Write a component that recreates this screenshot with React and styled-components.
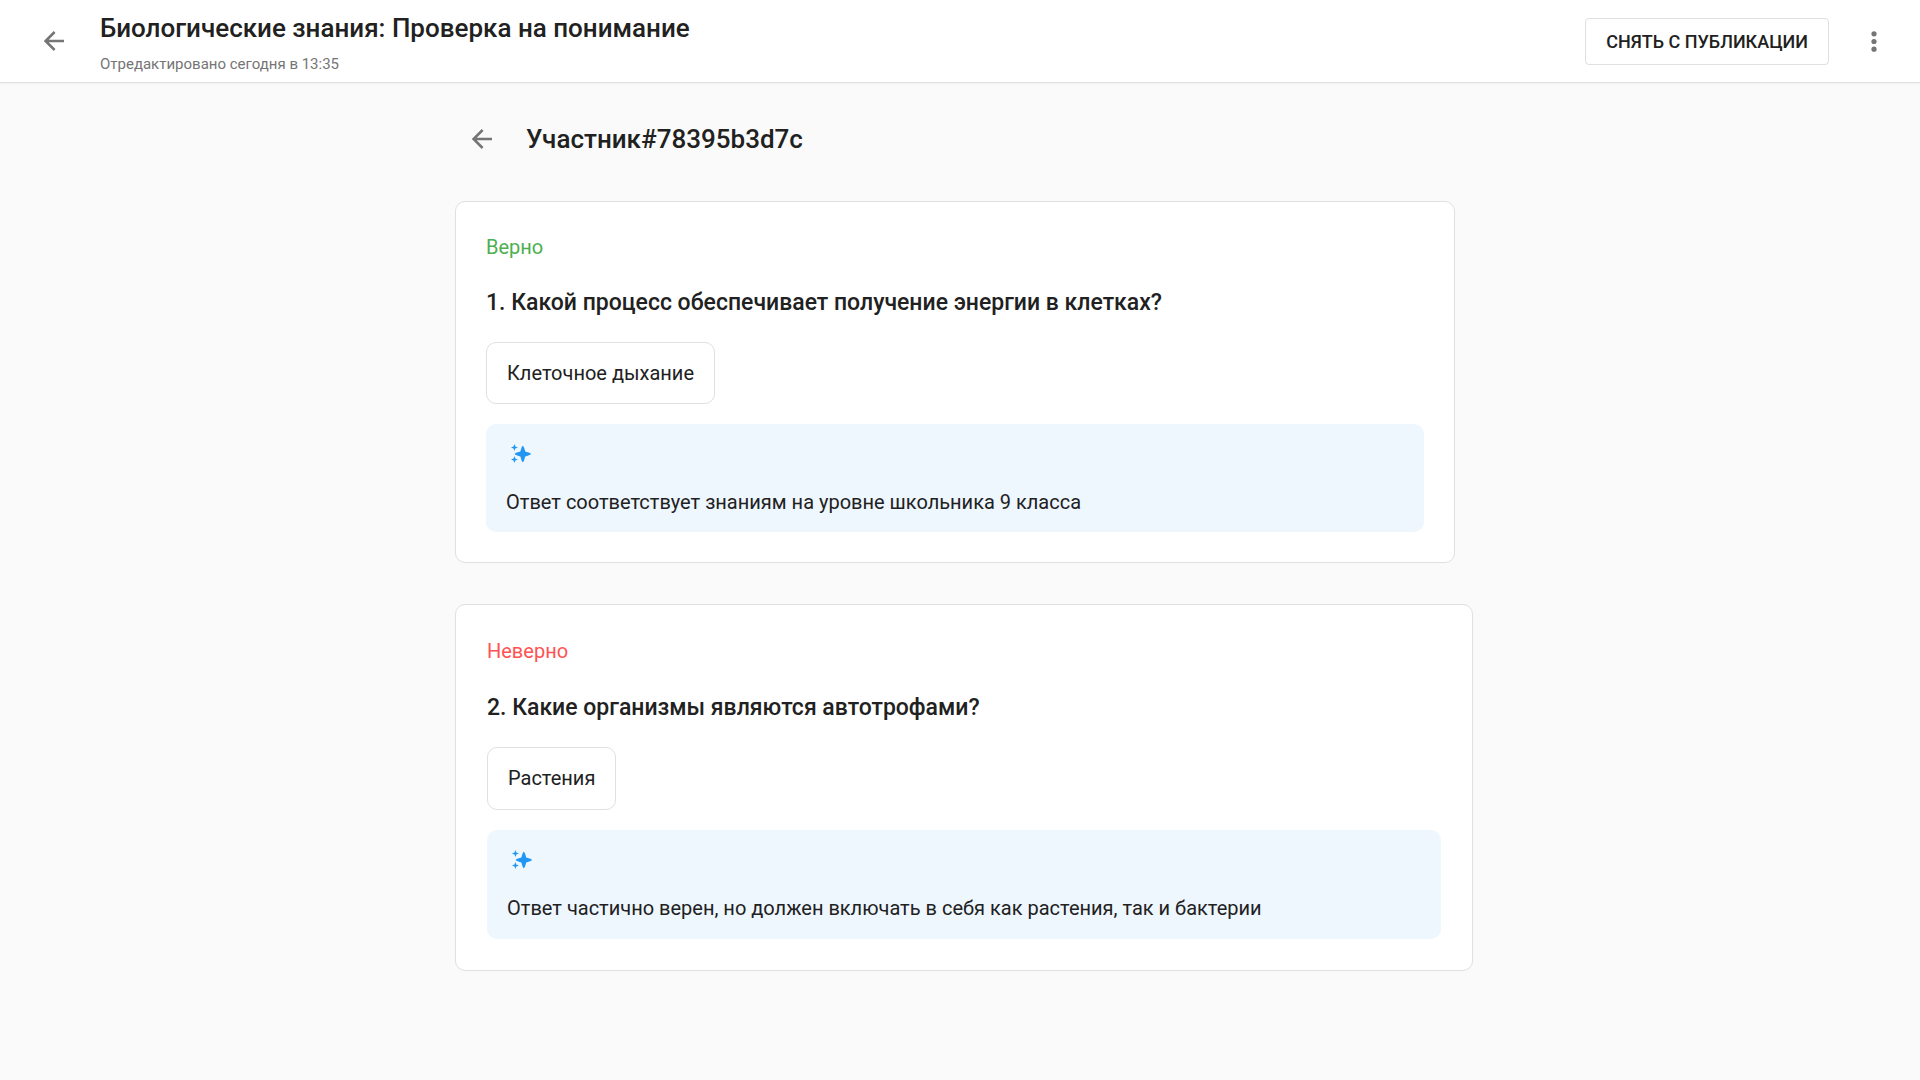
import React from "react";
import styled, { createGlobalStyle } from "styled-components";

const GlobalStyle = createGlobalStyle`
  * {
    box-sizing: border-box;
  }
  body {
    margin: 0;
    background: #fafafa;
    color: #212121;
    font-family: Roboto, "Liberation Sans", sans-serif;
  }
`;
const Header = styled.header`
  display: flex;
  align-items: center;
  height: 83px;
  padding: 0 24px 0 32px;
  background: #fff;
  border-bottom: 1px solid #e0e0e0;
  box-shadow: 0 1px 2px rgba(0, 0, 0, 0.04);
`;
const IconButton = styled.button`
  display: flex;
  align-items: center;
  justify-content: center;
  width: 44px;
  height: 44px;
  padding: 0;
  border: none;
  background: none;
  color: #757575;
  cursor: pointer;
`;
const HeaderText = styled.div`
  flex: 1;
  margin-left: 24px;
  padding-top: 6px;
`;
const HeaderTitle = styled.h1`
  margin: 0;
  font-size: 26px;
  font-weight: 500;
  line-height: 32px;
`;
const Edited = styled.p`
  margin: 8px 0 0;
  color: #757575;
  font-size: 15px;
  line-height: 24px;
`;
const UnpublishButton = styled.button`
  height: 47px;
  margin-right: 23px;
  padding: 0 20px;
  border: 1px solid #e0e0e0;
  border-radius: 4px;
  background: #fff;
  color: #212121;
  font-family: inherit;
  font-size: 18px;
  font-weight: 500;
  text-transform: uppercase;
  cursor: pointer;
`;
const Main = styled.main`
  max-width: 1026px;
  margin: 0 auto;
  padding: 34px 0 34px 8px;
`;
const Participant = styled.div`
  display: flex;
  align-items: center;
  gap: 22px;
  padding-left: 5px;
  margin-bottom: 40px;
`;
const ParticipantName = styled.h2`
  margin: 0;
  font-size: 26px;
  font-weight: 500;
  line-height: 32px;
`;
const Card = styled.section`
  max-width: ${(props) => (props.$wide ? "1018px" : "1000px")};
  margin-bottom: 41px;
  padding: ${(props) => (props.$wide ? "31px" : "30px")};
  border: 1px solid #e0e0e0;
  border-radius: 10px;
  background: #fff;
  font-size: 20px;
  line-height: ${(props) => (props.$wide ? "31px" : "30px")};
`;
const Verdict = styled.p`
  margin: 0 0 24px;
  color: ${(props) => (props.$correct ? "#4caf50" : "#ff5252")};
`;
const Question = styled.h3`
  margin: 0 0 22px;
  font-size: 23px;
  font-weight: 500;
  line-height: 34px;
`;
const Answer = styled.div`
  width: fit-content;
  padding: 15px 20px;
  border: 1px solid #e0e0e0;
  border-radius: 10px;
`;
const Comment = styled.div`
  margin-top: 20px;
  padding: 15px 20px;
  border-radius: 10px;
  background: #eef6fe;

  p {
    margin: 18px 0 0;
  }
`;
const SparklesSvg = styled.svg`
  display: block;
`;

const results = [
  {
    correct: true,
    question: "1. Какой процесс обеспечивает получение энергии в клетках?",
    answer: "Клеточное дыхание",
    comment: "Ответ соответствует знаниям на уровне школьника 9 класса",
  },
  {
    correct: false,
    question: "2. Какие организмы являются автотрофами?",
    answer: "Растения",
    comment:
      "Ответ частично верен, но должен включать в себя как растения, так и бактерии",
  },
];

function ArrowIcon() {
  return (
    <svg width="20" height="20" viewBox="0 0 20 20" fill="none">
      <path
        d="M20 10H1.8M10.6 1L1.6 10l9 9"
        stroke="currentColor"
        strokeWidth="2.5"
      />
    </svg>
  );
}

function DotsIcon() {
  return (
    <svg width="6" height="21" viewBox="0 0 6 21" fill="currentColor">
      <circle cx="3" cy="2.8" r="2.6" />
      <circle cx="3" cy="10.5" r="2.6" />
      <circle cx="3" cy="18.2" r="2.6" />
    </svg>
  );
}

function SparklesIcon() {
  return (
    <SparklesSvg width="30" height="30" viewBox="0 0 30 30" fill="#2196f3">
      <path d="M16.8 6.8Q17.8 7 19.2 12.6Q24.8 14 25 15Q24.8 16 19.2 17.4Q17.8 23 16.8 23.2Q15.8 23 14.4 17.4Q8.8 16 8.6 15Q8.8 14 14.4 12.6Q15.8 7 16.8 6.8Z" />
      <path d="M8.4 5L9.3 7.6L11.9 8.5L9.3 9.4L8.4 12L7.5 9.4L4.9 8.5L7.5 7.6Z" />
      <path d="M8.4 17L9.3 19.6L11.9 20.5L9.3 21.4L8.4 24L7.5 21.4L4.9 20.5L7.5 19.6Z" />
    </SparklesSvg>
  );
}

function App() {
  return (
    <>
      <GlobalStyle />
      <Header>
        <IconButton aria-label="Назад">
          <ArrowIcon />
        </IconButton>
        <HeaderText>
          <HeaderTitle>Биологические знания: Проверка на понимание</HeaderTitle>
          <Edited>Отредактировано сегодня в 13:35</Edited>
        </HeaderText>
        <UnpublishButton>Снять с публикации</UnpublishButton>
        <IconButton aria-label="Меню">
          <DotsIcon />
        </IconButton>
      </Header>
      <Main>
        <Participant>
          <IconButton aria-label="К списку участников">
            <ArrowIcon />
          </IconButton>
          <ParticipantName>Участник#78395b3d7c</ParticipantName>
        </Participant>
        {results.map((item) => (
          <Card key={item.question} $wide={!item.correct}>
            <Verdict $correct={item.correct}>
              {item.correct ? "Верно" : "Неверно"}
            </Verdict>
            <Question>{item.question}</Question>
            <Answer>{item.answer}</Answer>
            <Comment>
              <SparklesIcon />
              <p>{item.comment}</p>
            </Comment>
          </Card>
        ))}
      </Main>
    </>
  );
}

export default App;
